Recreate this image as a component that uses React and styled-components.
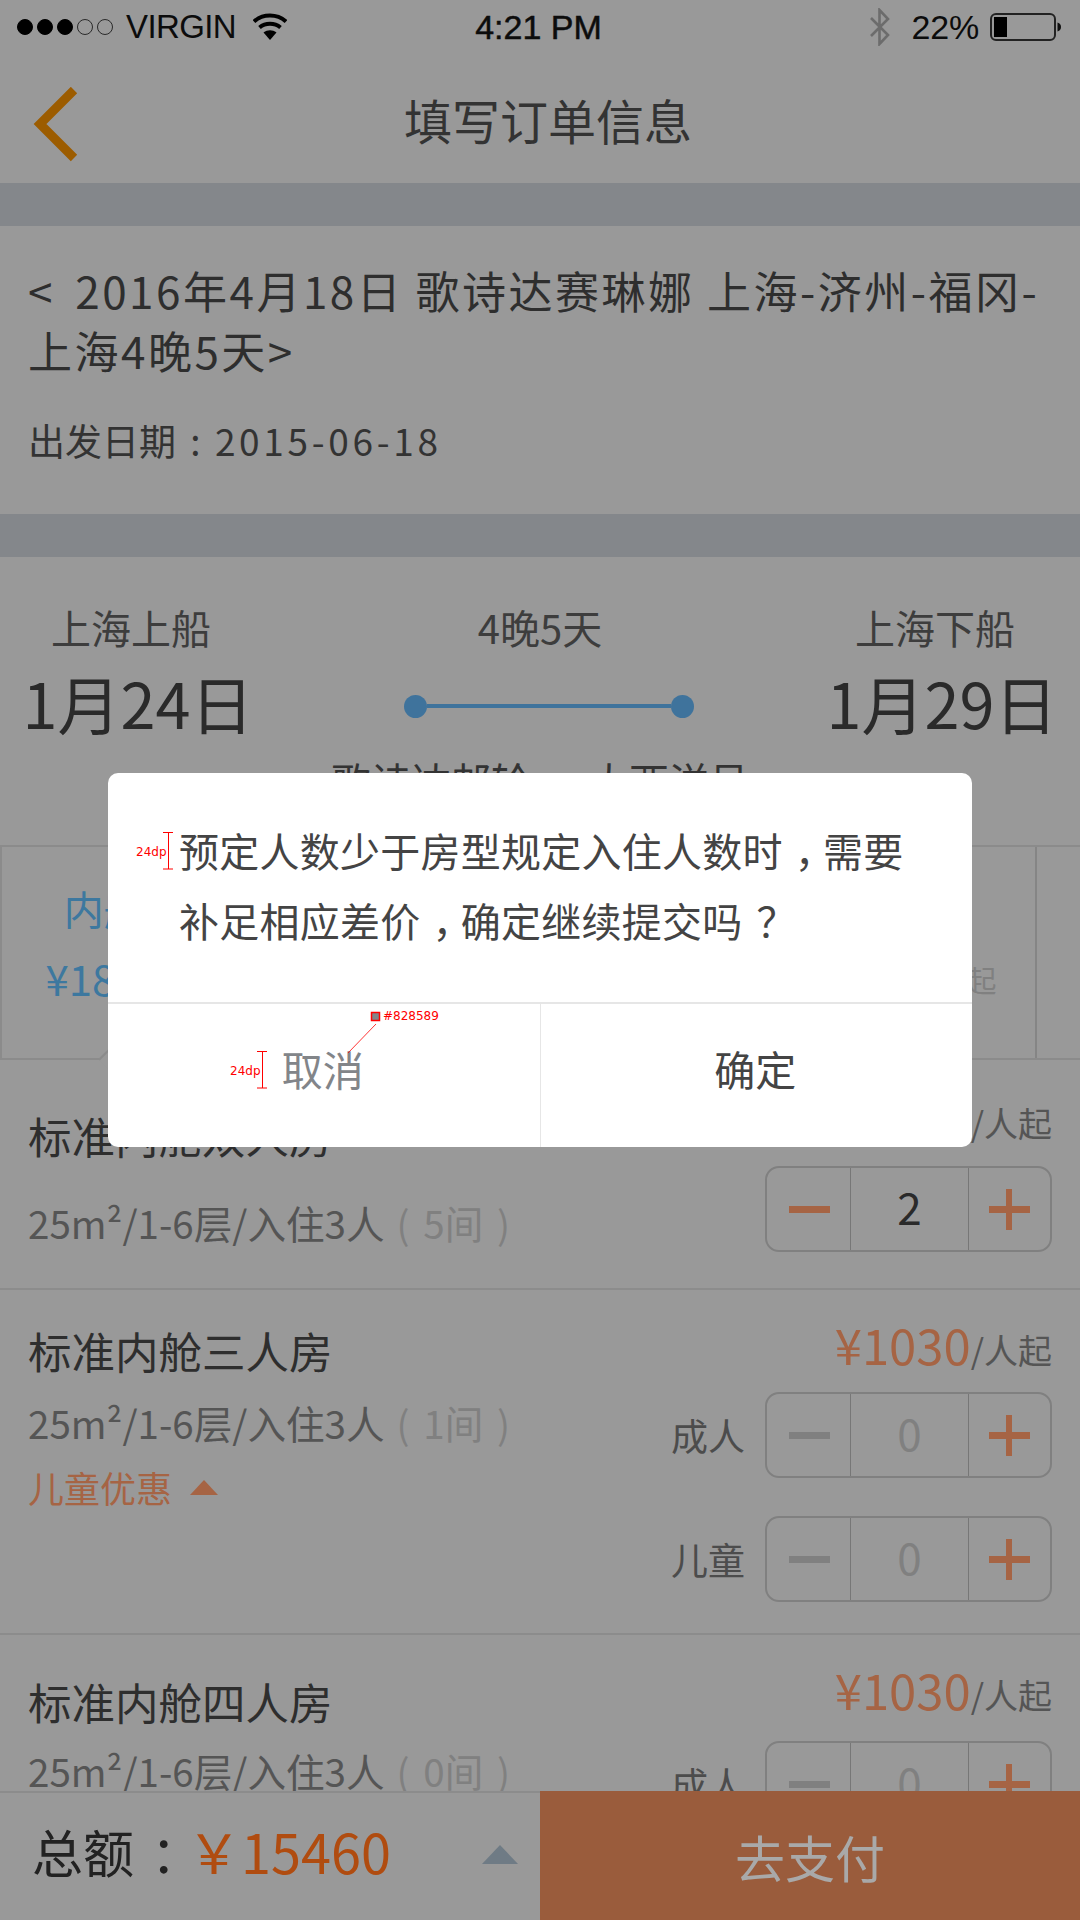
import React from 'react';
import styled, { createGlobalStyle } from 'styled-components';

const cjk = '"Noto Sans CJK SC", "Noto Sans", sans-serif';
const orange = '#a66444';

const GlobalStyle = createGlobalStyle`
    html, body {
        margin: 0;
        padding: 0;
    }
    body {
        background: #999;
        font-family: ${cjk};
    }
    * {
        box-sizing: border-box;
    }
`;

const Page = styled.div`
    position: relative;
    width: 1080px;
    height: 1920px;
    overflow: hidden;
    background: #999;
    color: #2e2e2e;
`;

/* status bar */
const StatusBar = styled.div`
    position: relative;
    height: 55px;
    display: flex;
    align-items: center;
    padding: 0 18px 1px 17px;
    font-family: "Liberation Sans", Arial, sans-serif;
    font-size: 34px;
    color: #0c0c0c;
`;

const Signal = styled.div`
    display: flex;
    gap: 4px;
    margin-right: 13px;
`;

const Dot = styled.span`
    width: 16px;
    height: 16px;
    border-radius: 50%;
    background: ${props => (props.$on ? '#000' : 'transparent')};
    border: 1.5px solid ${props => (props.$on ? '#000' : '#2a2a2a')};
`;

const Carrier = styled.span`
    font-size: 33px;
    letter-spacing: -0.6px;
    margin-right: 17px;
`;

const Clock = styled.span`
    position: absolute;
    left: 0;
    right: 0;
    top: 8px;
    padding-right: 3px;
    text-align: center;
    -webkit-text-stroke: 0.5px #0c0c0c;
`;

const StatusRight = styled.div`
    margin-left: auto;
    display: flex;
    align-items: center;
`;

const Percent = styled.span`
    margin: 0 11px 0 21px;
    letter-spacing: -0.2px;
`;

/* nav */
const NavBar = styled.div`
    position: relative;
    height: 128px;
    display: flex;
    align-items: center;
    justify-content: center;
    padding-left: 16px;
`;

const BackIcon = styled.svg`
    position: absolute;
    left: 33px;
    top: 32px;
`;

const NavTitle = styled.h1`
    margin: 0;
    font-size: 48px;
    font-weight: 400;
    line-height: 64px;
    color: #333;
`;

const Band = styled.div`
    height: 43px;
    background: #84878b;
`;

/* cruise info */
const InfoBox = styled.section`
    height: 288px;
    padding: 34px 28px 0 28px;
`;

const InfoTitle = styled.div`
    font-size: 44px;
    line-height: 60px;
    letter-spacing: 2.5px;
    white-space: nowrap;
    color: #2e2e2e;
`;

const OpenMark = styled.span`
    margin-right: 8px;
`;

const InfoDate = styled.div`
    margin-top: 35px;
    font-size: 37px;
    line-height: 50px;
    word-spacing: 6px;
    color: #333;
    white-space: nowrap;
    > span {
        letter-spacing: 3.7px;
    }
`;

/* voyage */
const Voyage = styled.section`
    height: 288px;
    padding: 45px 26px 0 26px;
    display: flex;
    justify-content: space-between;
    align-items: flex-start;
`;

const Port = styled.div`
    width: 224px;
    display: flex;
    flex-direction: column;
    align-items: center;
`;

const PortName = styled.div`
    padding-right: 14px;
    font-size: 40px;
    line-height: 50px;
    color: #3d3d3d;
`;

const PortDate = styled.div`
    margin-top: 10px;
    font-size: 63px;
    line-height: 80px;
    color: #2a2a2a;
    white-space: nowrap;
`;

const Middle = styled.div`
    display: flex;
    flex-direction: column;
    align-items: center;
`;

const Nights = styled.div`
    font-size: 40px;
    line-height: 50px;
    color: #3d3d3d;
`;

const Track = styled.div`
    margin: 13px 0 0 18px;
    width: 290px;
    height: 82px;
    display: flex;
    align-items: center;
`;

const TrackDot = styled.span`
    width: 23px;
    height: 23px;
    flex: none;
    border-radius: 50%;
    background: #3f739c;
`;

const TrackLine = styled.span`
    flex: 1;
    height: 4px;
    background: #3f739c;
`;

const ShipName = styled.div`
    margin-top: 8px;
    font-size: 40px;
    line-height: 50px;
    color: #333;
    white-space: nowrap;
`;

/* cabin tabs */
const Tabs = styled.div`
    height: 215px;
    display: flex;
    border-top: 2px solid #8b8b8b;
    border-bottom: 2px solid #8b8b8b;
`;

const Tab = styled.div`
    position: relative;
    flex: none;
    width: 207.4px;
    padding-top: 36px;
    display: flex;
    flex-direction: column;
    align-items: center;
    border-right: 2px solid #858585;
    border-left: ${props => (props.$active ? '2px solid #8b8b8b' : 'none')};
    color: ${props => (props.$active ? '#3d789f' : '#555')};
    ${props => props.$active && `
        &::after {
            content: '';
            position: absolute;
            left: 101px;
            bottom: -12px;
            width: 20px;
            height: 20px;
            background: #999;
            border-top: 2px solid #8b8b8b;
            border-left: 2px solid #8b8b8b;
            transform: rotate(45deg);
        }
    `}
`;

const TabName = styled.div`
    font-size: 40px;
    line-height: 50px;
`;

const TabPrice = styled.div`
    margin-top: 20px;
    font-size: 42px;
    line-height: 50px;
    white-space: nowrap;
`;

const TabMuted = styled.span`
    margin-left: 5px;
    font-size: 30px;
    vertical-align: 4px;
    color: #808080;
`;

/* rooms */
const Room = styled.section`
    height: ${props => props.$height}px;
    display: flex;
    justify-content: space-between;
    padding: 0 28px;
    border-bottom: 2px solid #8c8c8c;
`;

const RoomInfo = styled.div`
    padding-top: ${props => props.$top}px;
`;

const RoomTitle = styled.div`
    font-size: 43.5px;
    line-height: 60px;
    color: #2e2e2e;
    white-space: nowrap;
`;

const RoomSub = styled.div`
    margin-top: ${props => props.$gap}px;
    font-size: 38.6px;
    line-height: 50px;
    color: #555;
    white-space: nowrap;
`;

const Rooms = styled.span`
    color: #808080;
    margin-left: 12px;
    word-spacing: 5px;
`;

const Promo = styled.div`
    margin-top: 15px;
    display: flex;
    align-items: center;
    gap: 18px;
    font-size: 36px;
    line-height: 50px;
    color: ${orange};
`;

const Triangle = styled.span`
    width: 0;
    height: 0;
    border-left: ${props => props.$w / 2}px solid transparent;
    border-right: ${props => props.$w / 2}px solid transparent;
    border-bottom: ${props => props.$h}px solid ${props => props.$color};
`;

const RoomSide = styled.div`
    padding-top: ${props => props.$top}px;
    display: flex;
    flex-direction: column;
    align-items: flex-end;
`;

const Price = styled.div`
    height: 60px;
    padding-bottom: 8px;
    display: flex;
    align-items: center;
    font-size: 49px;
    color: ${orange};
    white-space: nowrap;
`;

const PerPerson = styled.span`
    font-size: 34px;
    color: #555;
    margin-top: 12px;
`;

const StepRow = styled.div`
    display: flex;
    align-items: center;
    gap: 20px;
    margin-top: ${props => props.$gap}px;
`;

const StepLabel = styled.span`
    font-size: 37px;
    color: #4c4c4c;
`;

const Stepper = styled.div`
    width: 287px;
    height: 86px;
    display: flex;
    border: 2px solid #808080;
    border-radius: 14px;
`;

const StepButton = styled.div`
    position: relative;
    flex: none;
    width: ${props => (props.$plus ? 81 : 83)}px;
    &::before {
        content: '';
        position: absolute;
        left: ${props => (props.$plus ? 20 : 22)}px;
        top: 38px;
        width: 41px;
        height: 7px;
        background: ${props => props.$color};
    }
    &::after {
        content: '';
        display: ${props => (props.$plus ? 'block' : 'none')};
        position: absolute;
        left: 37px;
        top: 21px;
        width: 6px;
        height: 41px;
        background: ${props => props.$color};
    }
`;

const StepValue = styled.div`
    flex: 1;
    border-left: 1px solid #777;
    border-right: 1px solid #777;
    text-align: center;
    font-size: 44px;
    line-height: 76px;
    color: ${props => (props.$zero ? '#808080' : '#2a2a2a')};
`;

/* bottom bar */
const PayBar = styled.div`
    position: absolute;
    left: 0;
    right: 0;
    bottom: 0;
    height: 129px;
    display: flex;
    background: #999;
`;

const Total = styled.div`
    width: 540px;
    display: flex;
    align-items: center;
    padding: 0 22px 12px 32px;
    border-top: 2px solid #8c8c8c;
    font-size: 51px;
    color: #222;
`;

const TotalPrice = styled.span`
    margin-left: 2px;
    font-size: 54px;
    color: #b04c10;
`;

const TotalArrow = styled.span`
    display: flex;
    margin-left: auto;
    margin-top: 8px;
`;

const PayButton = styled.div`
    flex: 1;
    display: flex;
    align-items: center;
    justify-content: center;
    background: #9a5c3c;
    font-size: 50px;
    color: #a9a9a9;
`;

/* fullwidth punctuation sits mid-cell in the design, not at the left */
const Punct = styled.span`
    display: inline-block;
    transform: translateX(${props => props.$shift}px);
`;

/* dialog */
const Backdrop = styled.div`
    position: absolute;
    inset: 0;
    display: flex;
    align-items: center;
    justify-content: center;
`;

const Dialog = styled.div`
    position: relative;
    width: 864px;
    height: 374px;
    background: #fff;
    border-radius: 10px;
    display: flex;
    flex-direction: column;
`;

const DialogText = styled.div`
    height: 231px;
    padding: 42px 0 0 71px;
    border-bottom: 2px solid #e6e6e6;
    font-size: 40px;
    letter-spacing: 0.25px;
    line-height: 70px;
    color: #444;
    white-space: nowrap;
`;

const DialogActions = styled.div`
    flex: 1;
    display: flex;
`;

const DialogAction = styled.div`
    flex: 1;
    display: flex;
    align-items: center;
    justify-content: center;
    padding: 0 2px 16px 0;
    font-size: 41px;
    color: ${props => props.$color};
    & + & {
        border-left: 1px solid #e6e6e6;
    }
`;

/* red spec marks that sit on the dialog */
const MarkLayer = styled.svg`
    position: absolute;
    left: 0;
    top: 0;
    pointer-events: none;
`;

const MarkText = styled.span`
    position: absolute;
    left: ${props => props.$x}px;
    top: ${props => props.$y}px;
    font-family: "DejaVu Sans", sans-serif;
    font-size: 12px;
    line-height: 14px;
    color: #f00;
`;

function Status() {
    return (
        <StatusBar>
            <Signal>
                {[1, 1, 1, 0, 0].map((on, i) => (
                    <Dot key={i} $on={on === 1} />
                ))}
            </Signal>
            <Carrier>VIRGIN</Carrier>
            <svg width="34" height="28" viewBox="0 0 34 28">
                <path d="M1 8.5C10 0.5 24 0.5 33 8.5" fill="none" stroke="#000" strokeWidth="4" />
                <path d="M6.5 14.5C12.5 9.5 21.5 9.5 27.5 14.5" fill="none" stroke="#000" strokeWidth="4" />
                <path d="M10.5 19.5C14.5 16.5 19.5 16.5 23.5 19.5L17 27Z" fill="#000" />
            </svg>
            <Clock>4:21 PM</Clock>
            <StatusRight>
                <svg width="22" height="38" viewBox="0 0 22 38">
                    <path d="M2 10L19 27L10.5 36V2L19 11L2 28" fill="none" stroke="#6c6c6c" strokeWidth="2.6" />
                </svg>
                <Percent>22%</Percent>
                <svg width="72" height="28" viewBox="0 0 72 28">
                    <rect x="1" y="1" width="64" height="26" rx="5" fill="none" stroke="#222" strokeWidth="2" />
                    <rect x="4" y="4" width="13" height="20" fill="#000" />
                    <path d="M67.5 9.5C70 10 71 12 71 14C71 16 70 18 67.5 18.5Z" fill="#111" />
                </svg>
            </StatusRight>
        </StatusBar>
    );
}

function Counter({ value, active }) {
    const minus = active ? orange : '#808080';
    return (
        <Stepper>
            <StepButton $color={minus} />
            <StepValue $zero={!active}>{value}</StepValue>
            <StepButton $plus $color={orange} />
        </Stepper>
    );
}

function PriceLine() {
    return (
        <Price>
            ¥1030<PerPerson>/人起</PerPerson>
        </Price>
    );
}

export default function App() {
    return (
        <Page>
            <GlobalStyle />
            <Status />
            <NavBar>
                <BackIcon width="46" height="76" viewBox="0 0 46 76">
                    <path d="M41 3L7 37L41 71" fill="none" stroke="#9c5c00" strokeWidth="9" />
                </BackIcon>
                <NavTitle>填写订单信息</NavTitle>
            </NavBar>
            <Band />
            <InfoBox>
                <InfoTitle>
                    <OpenMark>&lt;</OpenMark> 2016年4月18日 歌诗达赛琳娜 上海-济州-福冈-
                    <br />
                    上海4晚5天&gt;
                </InfoTitle>
                <InfoDate>
                    出发日期 : <span>2015-06-18</span>
                </InfoDate>
            </InfoBox>
            <Band />
            <Voyage>
                <Port>
                    <PortName>上海上船</PortName>
                    <PortDate>1月24日</PortDate>
                </Port>
                <Middle>
                    <Nights>4晚5天</Nights>
                    <Track>
                        <TrackDot />
                        <TrackLine />
                        <TrackDot />
                    </Track>
                    <ShipName>歌诗达邮轮 · 大西洋号</ShipName>
                </Middle>
                <Port>
                    <PortName>上海下船</PortName>
                    <PortDate>1月29日</PortDate>
                </Port>
            </Voyage>
            <Tabs>
                <Tab $active>
                    <TabName>内舱</TabName>
                    <TabPrice>¥1830</TabPrice>
                </Tab>
                <Tab>
                    <TabName>海景</TabName>
                    <TabPrice>¥2030</TabPrice>
                </Tab>
                <Tab>
                    <TabName>阳台</TabName>
                    <TabPrice>¥2630</TabPrice>
                </Tab>
                <Tab>
                    <TabName>套房</TabName>
                    <TabPrice>¥3830</TabPrice>
                </Tab>
                <Tab>
                    <TabName>豪华</TabName>
                    <TabPrice>¥830<TabMuted>起</TabMuted></TabPrice>
                </Tab>
            </Tabs>
            <Room $height={230}>
                <RoomInfo $top={46}>
                    <RoomTitle>标准内舱双人房</RoomTitle>
                    <RoomSub $gap={31}>
                        25m²/1-6层/入住3人<Rooms>( 5间 )</Rooms>
                    </RoomSub>
                </RoomInfo>
                <RoomSide $top={30}>
                    <PriceLine />
                    <StepRow $gap={16}>
                        <Counter value={2} active />
                    </StepRow>
                </RoomSide>
            </Room>
            <Room $height={345}>
                <RoomInfo $top={31}>
                    <RoomTitle>标准内舱三人房</RoomTitle>
                    <RoomSub $gap={16}>
                        25m²/1-6层/入住3人<Rooms>( 1间 )</Rooms>
                    </RoomSub>
                    <Promo>
                        儿童优惠
                        <Triangle $w={29} $h={15} $color={orange} />
                    </Promo>
                </RoomInfo>
                <RoomSide $top={27}>
                    <PriceLine />
                    <StepRow $gap={15}>
                        <StepLabel>成人</StepLabel>
                        <Counter value={0} />
                    </StepRow>
                    <StepRow $gap={38}>
                        <StepLabel>儿童</StepLabel>
                        <Counter value={0} />
                    </StepRow>
                </RoomSide>
            </Room>
            <Room $height={345}>
                <RoomInfo $top={37}>
                    <RoomTitle>标准内舱四人房</RoomTitle>
                    <RoomSub $gap={13}>
                        25m²/1-6层/入住3人<Rooms>( 0间 )</Rooms>
                    </RoomSub>
                </RoomInfo>
                <RoomSide $top={27}>
                    <PriceLine />
                    <StepRow $gap={19}>
                        <StepLabel>成人</StepLabel>
                        <Counter value={0} />
                    </StepRow>
                </RoomSide>
            </Room>
            <PayBar>
                <Total>
                    总额<Punct $shift={17}>：</Punct>
                    <TotalPrice>￥15460</TotalPrice>
                    <TotalArrow>
                        <Triangle $w={36} $h={19} $color="#6f7b85" />
                    </TotalArrow>
                </Total>
                <PayButton>去支付</PayButton>
            </PayBar>
            <Backdrop>
                <Dialog>
                    <DialogText>
                        预定人数少于房型规定入住人数时<Punct $shift={12}>，</Punct>需要
                        <br />
                        补足相应差价<Punct $shift={12}>，</Punct>确定继续提交吗<Punct $shift={14}>？</Punct>
                    </DialogText>
                    <DialogActions>
                        <DialogAction $color="#828589">取消</DialogAction>
                        <DialogAction $color="#444">确定</DialogAction>
                    </DialogActions>
                    <MarkLayer width="864" height="374" viewBox="0 0 864 374">
                        <path d="M55 59.5H65M60.5 59.5V96M55 96H65M149 278.5H159M154.5 278.5V315M149 315H159" fill="none" stroke="#f00" strokeWidth="1" />
                        <rect x="263.5" y="239.5" width="8" height="8" fill="#828589" stroke="#f00" strokeWidth="1.5" />
                        <path d="M268 251L240 280" fill="none" stroke="#f00" strokeWidth="0.8" />
                    </MarkLayer>
                    <MarkText $x={28} $y={72}>24dp</MarkText>
                    <MarkText $x={122} $y={291}>24dp</MarkText>
                    <MarkText $x={275} $y={236}>#828589</MarkText>
                </Dialog>
            </Backdrop>
        </Page>
    );
}
